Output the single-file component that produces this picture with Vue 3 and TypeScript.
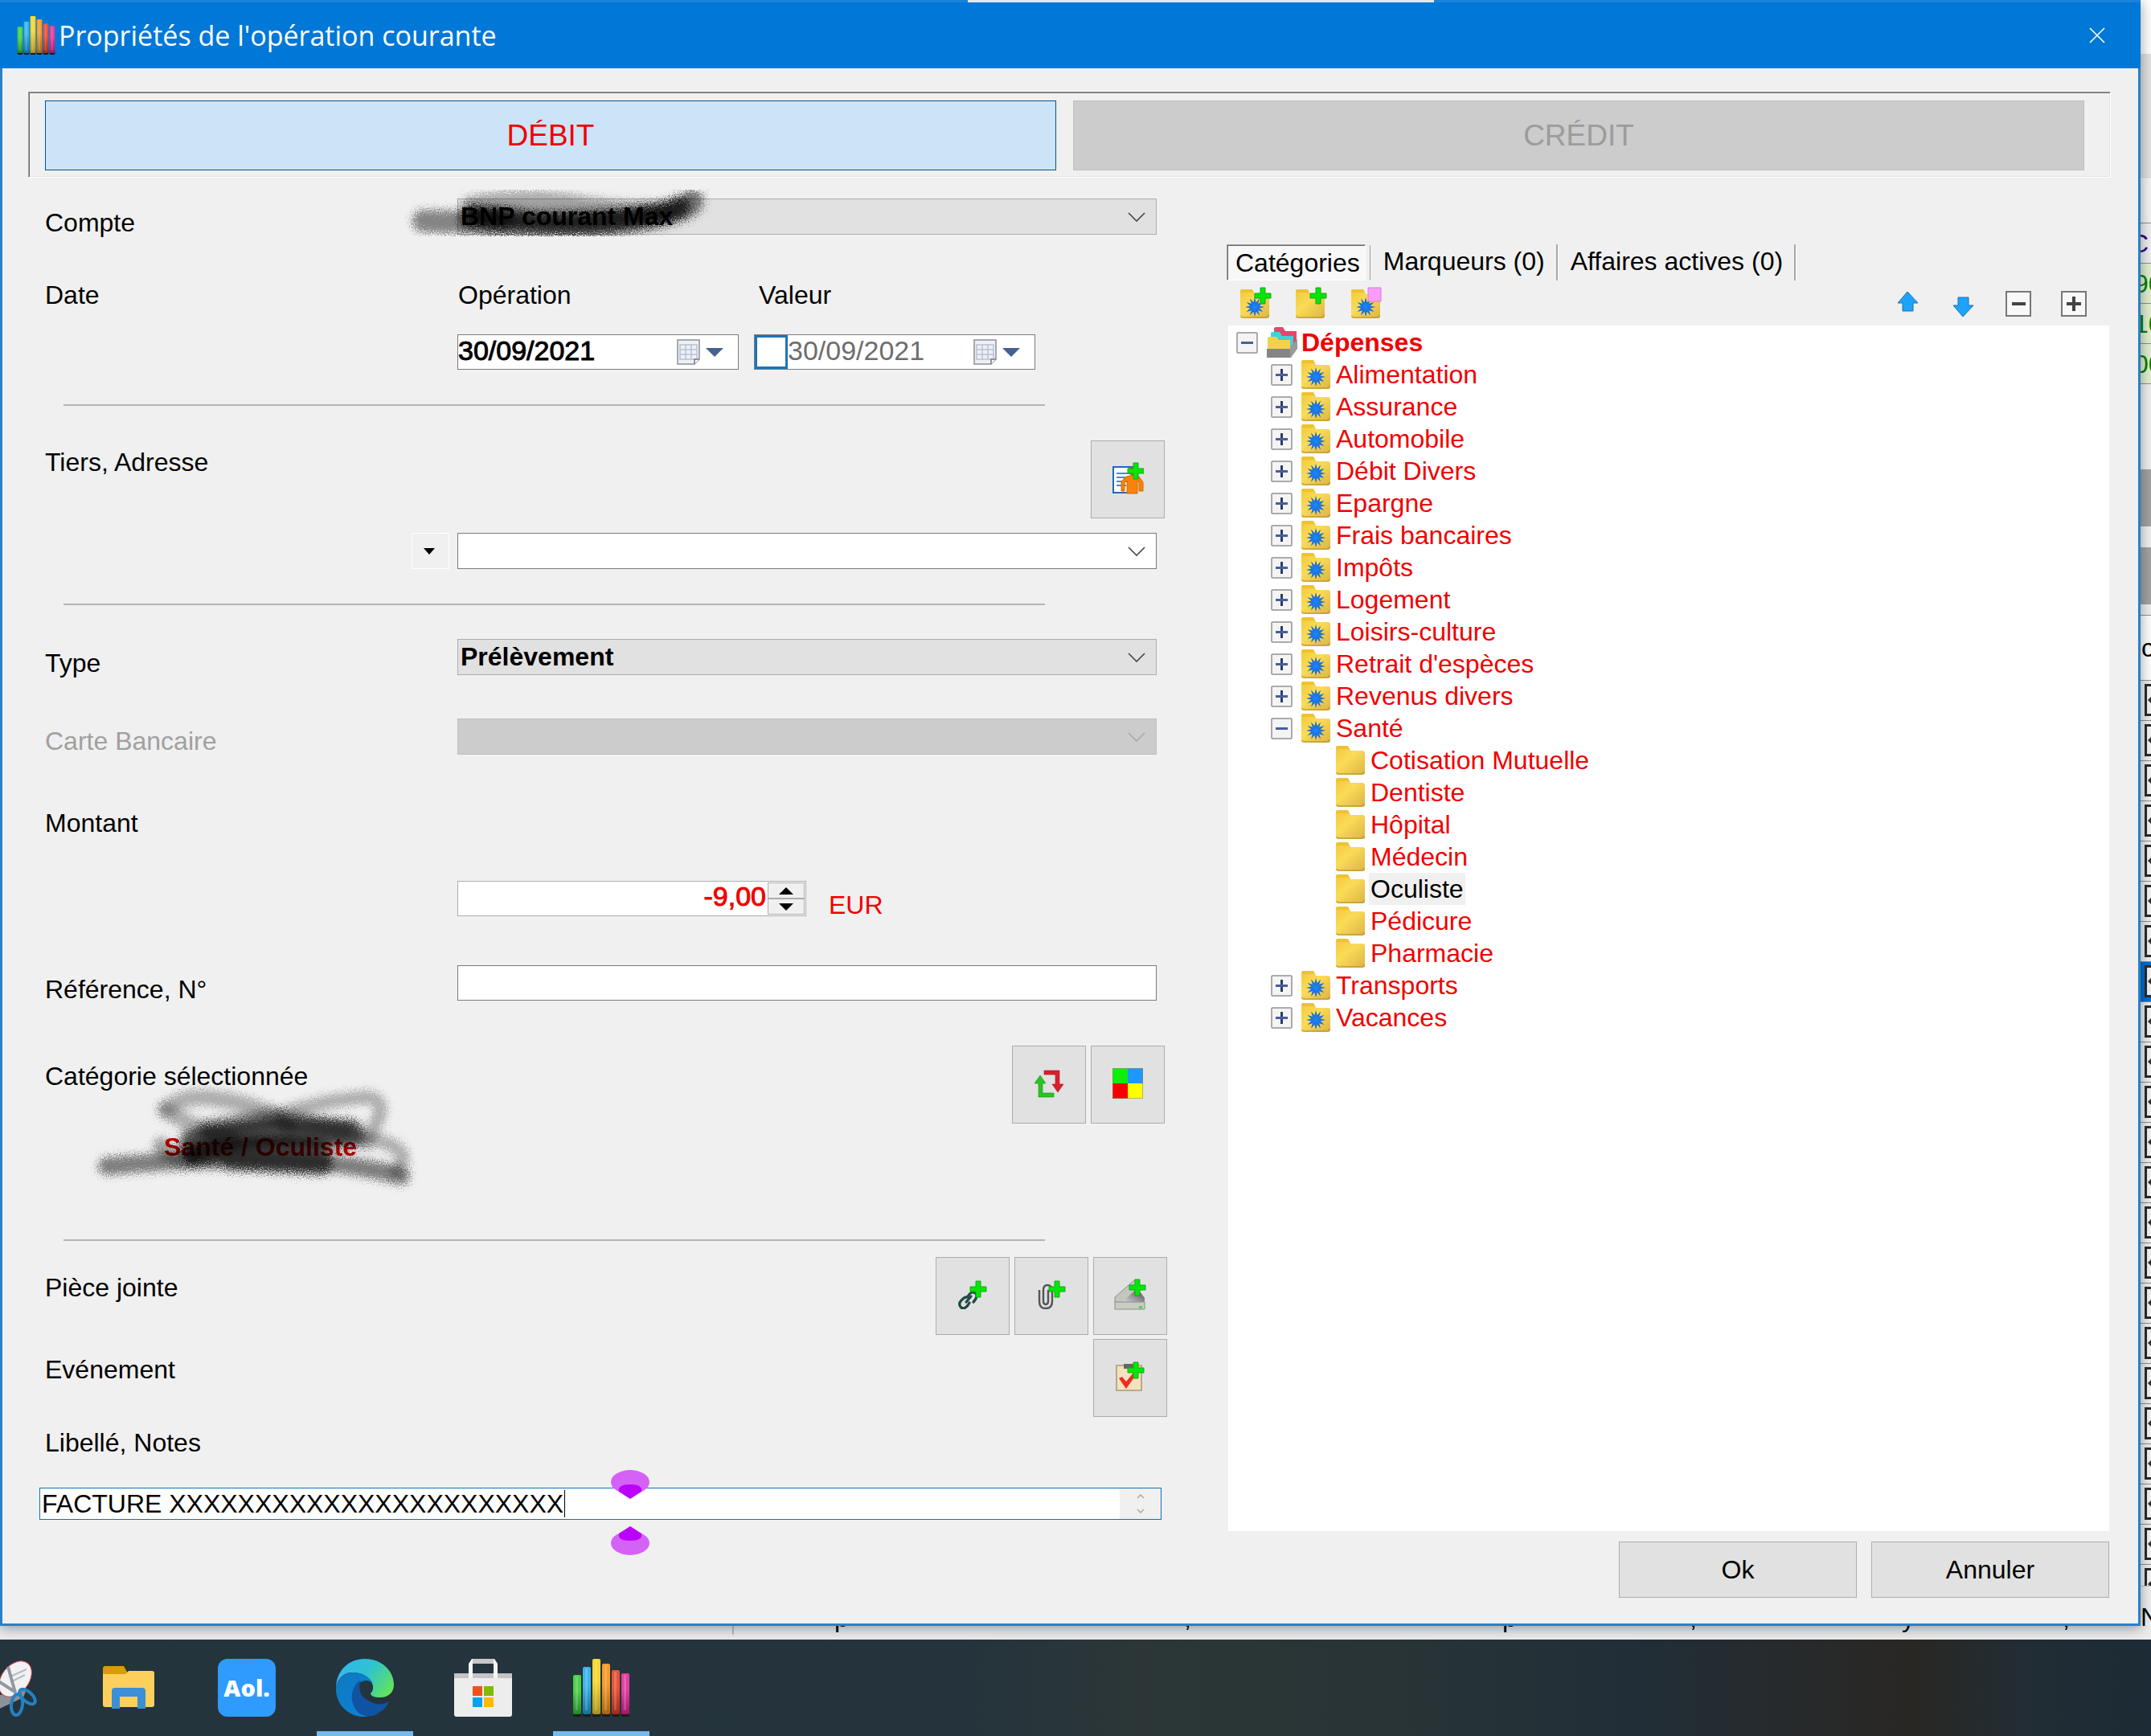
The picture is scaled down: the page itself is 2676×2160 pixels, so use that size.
<script setup lang="ts">
import { computed, ref } from 'vue'

interface CategoryRow {
  label: string
  level: number
  state: 'open' | 'closed' | 'leaf'
}

const closed = (label: string): CategoryRow => ({ label, level: 1, state: 'closed' })
const leaf = (label: string): CategoryRow => ({ label, level: 2, state: 'leaf' })

const categories: CategoryRow[] = [
  { label: 'Dépenses', level: 0, state: 'open' },
  ...['Alimentation', 'Assurance', 'Automobile', 'Débit Divers', 'Epargne', 'Frais bancaires',
    'Impôts', 'Logement', 'Loisirs-culture', "Retrait d'espèces", 'Revenus divers'].map(closed),
  { label: 'Santé', level: 1, state: 'open' },
  ...['Cotisation Mutuelle', 'Dentiste', 'Hôpital', 'Médecin', 'Oculiste', 'Pédicure', 'Pharmacie'].map(leaf),
  ...['Transports', 'Vacances'].map(closed),
]

const selected = ref('Oculiste')
const operationDate = ref('30/09/2021')
const valueDate = ref('30/09/2021')
const valueDateOn = ref(false)
const amount = ref('-9,00')
const reference = ref('')
const notes = ref('FACTURE XXXXXXXXXXXXXXXXXXXXXXX')

const star = computed(() =>
  Array.from({ length: 24 }, (_, i) => {
    const r = i % 2 ? 6 : 12
    const a = (i * Math.PI) / 12 - Math.PI / 2
    return `${(18 + r * Math.cos(a)).toFixed(1)},${(21 + r * Math.sin(a)).toFixed(1)}`
  }).join(' '),
)

const bars = [
  { x: 0, y: 20, fill: 'url(#bar-green)' },
  { x: 12, y: 10, fill: 'url(#bar-blue)' },
  { x: 24, y: 0, fill: 'url(#bar-yellow)' },
  { x: 36, y: 6, fill: 'url(#bar-orange)' },
  { x: 48, y: 14, fill: 'url(#bar-red)' },
  { x: 60, y: 18, fill: 'url(#bar-pink)' },
]

const barColors = [
  { id: 'bar-green', top: '#4fd04a', bottom: '#24862a' },
  { id: 'bar-blue', top: '#3db4ea', bottom: '#17719b' },
  { id: 'bar-yellow', top: '#f5d733', bottom: '#a8931c' },
  { id: 'bar-orange', top: '#f59c2c', bottom: '#a9660e' },
  { id: 'bar-red', top: '#e8533a', bottom: '#9c2c1a' },
  { id: 'bar-pink', top: '#e23fa0', bottom: '#a01768' },
]

const descenders = [
  { x: 1038, t: 'p' }, { x: 1473, t: ',' }, { x: 1869, t: 'p' },
  { x: 2102, t: ',' }, { x: 2366, t: 'y' }, { x: 2566, t: ',' },
]
</script>

<template>
  <div class="desktop">
    <svg class="defs" width="0" height="0" aria-hidden="true">
      <defs>
        <linearGradient v-for="c in barColors" :id="c.id" :key="c.id" x1="0" y1="0" x2="0" y2="1">
          <stop offset="0" :stop-color="c.top" /><stop offset="0.4" :stop-color="c.top" />
          <stop offset="1" :stop-color="c.bottom" />
        </linearGradient>
        <linearGradient id="folder" x1="0" y1="0" x2="1" y2="1">
          <stop offset="0" stop-color="#f3cb3c" /><stop offset="0.4" stop-color="#fadb58" />
          <stop offset="1" stop-color="#dcb445" />
        </linearGradient>
        <linearGradient id="scan" x1="0" y1="1" x2="1" y2="0">
          <stop offset="0" stop-color="#e0e0e0" /><stop offset="1" stop-color="#3c4244" />
        </linearGradient>
        <radialGradient id="starfill">
          <stop offset="0" stop-color="#1c86ff" /><stop offset="1" stop-color="#1560c0" />
        </radialGradient>
        <filter id="grain" x="-10%" y="-30%" width="120%" height="160%">
          <feTurbulence type="fractalNoise" baseFrequency="0.7" numOctaves="2" seed="4" result="n" />
          <feGaussianBlur in="SourceGraphic" stdDeviation="4" result="b" />
          <feDisplacementMap in="b" in2="n" scale="22" xChannelSelector="R" yChannelSelector="G" />
        </filter>
        <symbol id="i-folder" viewBox="0 0 36 36">
          <path d="M0 2q0-2 2-2h13l3 6H0z" fill="#efc22e" />
          <path d="M0 4h15l3 2h15q3 0 3 3v24q0 3-3 3H3q-3 0-3-3z" fill="url(#folder)" />
          <path d="M1 33q0 2 3 2h28q3 0 3-3" fill="none" stroke="#b8922e" stroke-opacity=".6" stroke-width="2" />
        </symbol>
        <symbol id="i-star" viewBox="0 0 36 36"><polygon :points="star" fill="url(#starfill)" /></symbol>
        <symbol id="i-plus" viewBox="0 0 22 22">
          <path d="M8 1h6v7h7v6h-7v7H8v-7H1V8h7z" fill="#06e606" stroke="#12a81c" stroke-width="1" />
        </symbol>
        <symbol id="i-chevron" viewBox="0 0 22 12">
          <path d="M1 1l10 10L21 1" fill="none" stroke="currentColor" stroke-width="1.6" />
        </symbol>
        <symbol id="i-calendar" viewBox="0 0 58 32">
          <path d="M1 1h27v24l-6 6H1z" fill="#eef0f5" stroke="#8a8f98" stroke-width="1.5" />
          <path d="M4 7h21v18H4zM4 13h21M4 19h21M11 7v18M18 7v18" fill="none" stroke="#b8c1d2" stroke-width="1.5" />
          <path d="M28 25h-6v6" fill="#fff" stroke="#777" stroke-width="1.5" />
          <path d="M36 11h22L47 22z" fill="#45618c" />
        </symbol>
        <symbol id="i-bars" viewBox="0 0 70 72">
          <g v-for="b in bars" :key="b.x">
            <rect :x="b.x" y="62" width="10" height="10" rx="2" fill="#1d1a1a" />
            <rect :x="b.x" :y="b.y" width="10" :height="69 - b.y" rx="2" :fill="b.fill" />
            <rect :x="b.x + 3" :y="b.y + 2" width="3" :height="62 - b.y" fill="#fff" opacity=".18" />
          </g>
        </symbol>
      </defs>
    </svg>

    <div class="workspace">
      <main class="dialog">
        <header class="titlebar">
          <svg class="app-icon"><use href="#i-bars" /></svg>
          <h1>Propriétés de l'opération courante</h1>
          <button class="close" aria-label="Fermer">
            <svg width="20" height="20" viewBox="0 0 20 20"><path d="M1 1l18 18M19 1L1 19" stroke="#fff" stroke-width="1.6" /></svg>
          </button>
        </header>

        <div class="direction">
          <button class="debit">DÉBIT</button>
          <button class="credit" disabled>CRÉDIT</button>
        </div>

        <div class="columns">
          <form class="form" @submit.prevent>
            <div class="row account">
              <label for="account">Compte</label>
              <span class="pick">
                <select id="account"><option>BNP courant Max</option></select>
                <svg><use href="#i-chevron" /></svg>
              </span>
              <svg class="scribble first" viewBox="0 0 400 80" aria-hidden="true">
                <g fill="none" stroke="#000" stroke-linecap="round" filter="url(#grain)">
                  <path d="M32 46Q70 48 130 46" stroke-width="28" opacity=".45" />
                  <path d="M90 26Q150 12 220 24T330 32" stroke-width="22" opacity=".28" />
                  <path d="M90 44Q190 62 280 48T366 20" stroke-width="28" opacity=".5" />
                  <path d="M95 38Q200 50 270 44T350 28" stroke-width="26" opacity=".72" />
                </g>
              </svg>
            </div>

            <div class="row date-heads">
              <span class="label">Date</span>
              <label for="op-date">Opération</label>
              <label for="val-date">Valeur</label>
            </div>
            <div class="row dates">
              <span class="datebox">
                <input id="op-date" v-model="operationDate" type="text" />
                <button aria-label="Ouvrir le calendrier"><svg><use href="#i-calendar" /></svg></button>
              </span>
              <span class="datebox muted">
                <input v-model="valueDateOn" type="checkbox" aria-label="Activer la date de valeur" />
                <input id="val-date" v-model="valueDate" type="text" />
                <button aria-label="Ouvrir le calendrier"><svg><use href="#i-calendar" /></svg></button>
              </span>
            </div>

            <hr />

            <div class="row tall third">
              <label for="payee">Tiers, Adresse</label>
              <span class="tools inset">
                <button class="tool" aria-label="Nouveau tiers">
                  <svg width="40" height="40" viewBox="0 0 40 40">
                    <path d="M2 6h24v32H2z" fill="#fff" stroke="#1d6ac4" stroke-width="2" />
                    <path d="M6 14h16M6 19h16M6 24h16M6 29h12" stroke="#1d5fb4" stroke-width="1.6" />
                    <path d="M12 36V24l6-6 8-2 8 2 5 7v11h-5V25l-2-2v16H19V23l-3 3v10z" fill="#f98207" stroke="#cf6a08" stroke-width="1" />
                    <circle cx="25" cy="11" r="5" fill="#b8601a" />
                    <use href="#i-plus" x="19" y="0" width="22" height="22" />
                  </svg>
                </button>
              </span>
            </div>
            <div class="row payee">
              <button class="drop" aria-label="Choix du tiers">
                <svg width="14" height="8" viewBox="0 0 14 8"><path d="M0 0h14L7 8z" /></svg>
              </button>
              <span class="pick white">
                <select id="payee"><option></option></select>
                <svg><use href="#i-chevron" /></svg>
              </span>
            </div>

            <hr />

            <div class="row type">
              <label for="type">Type</label>
              <span class="pick">
                <select id="type"><option>Prélèvement</option></select>
                <svg><use href="#i-chevron" /></svg>
              </span>
            </div>
            <div class="row card off">
              <label for="card">Carte Bancaire</label>
              <span class="pick">
                <select id="card" disabled><option></option></select>
                <svg><use href="#i-chevron" /></svg>
              </span>
            </div>
            <div class="row amount-label"><label for="amount">Montant</label></div>
            <div class="row amount">
              <span class="spin">
                <input id="amount" v-model="amount" type="text" />
                <span class="steps">
                  <button aria-label="Augmenter"><svg width="18" height="9" viewBox="0 0 18 9"><path d="M0 9L9 0l9 9z" /></svg></button>
                  <button aria-label="Diminuer"><svg width="18" height="9" viewBox="0 0 18 9"><path d="M0 0h18L9 9z" /></svg></button>
                </span>
              </span>
              <span class="currency">EUR</span>
            </div>
            <div class="row reference">
              <label for="reference">Référence, N°</label>
              <input id="reference" v-model="reference" type="text" />
            </div>

            <div class="row tall category">
              <span class="label">Catégorie sélectionnée</span>
              <span class="tools inset">
                <button class="tool" aria-label="Inverser">
                  <svg width="36" height="36" viewBox="0 0 36 36">
                    <path d="M12 2h19v17h5l-7 10-7-10h4V7H12z" fill="#d8202c" stroke="#a51520" stroke-width=".6" />
                    <path d="M24 35H5V18H0L7 8l7 10h-4v12h14z" fill="#27c522" stroke="#1a9018" stroke-width=".6" />
                  </svg>
                </button>
                <button class="tool" aria-label="Couleurs">
                  <svg width="38" height="38" viewBox="0 0 38 38">
                    <path d="M0 0h19v19H0z" fill="#0cf00c" /><path d="M19 0h19v19H19z" fill="#1c98ff" />
                    <path d="M0 19h19v19H0z" fill="#f80000" /><path d="M19 19h19v19H19z" fill="#ffff00" />
                    <path d="M0 0h38v38H0z" fill="none" stroke="#8a8a60" stroke-opacity=".6" stroke-width="2" />
                  </svg>
                </button>
              </span>
            </div>
            <div class="row chosen">
              <span>Santé / Oculiste</span>
              <svg class="scribble second" viewBox="0 0 420 140" aria-hidden="true">
                <g fill="none" stroke="#000" stroke-linecap="round" stroke-linejoin="round" filter="url(#grain)">
                  <path d="M100 34Q120 16 160 22Q220 30 250 56" stroke-width="20" opacity=".28" />
                  <path d="M96 36Q130 58 180 72" stroke-width="20" opacity=".28" />
                  <path d="M240 42Q290 24 350 20Q372 26 360 50L346 78" stroke-width="17" opacity=".28" />
                  <path d="M340 70Q394 78 392 98L384 112" stroke-width="17" opacity=".28" />
                  <path d="M24 106Q110 98 210 98T390 118" stroke-width="22" opacity=".48" />
                  <path d="M92 80Q96 96 130 96" stroke-width="20" opacity=".35" />
                  <path d="M150 60L230 46L320 62" stroke-width="24" opacity=".42" />
                  <path d="M132 78Q220 58 326 66" stroke-width="36" opacity=".66" />
                  <path d="M134 92Q220 76 286 88L290 102L180 96" stroke-width="30" opacity=".66" />
                </g>
              </svg>
            </div>

            <hr />

            <div class="row tall">
              <span class="label">Pièce jointe</span>
              <span class="tools">
                <button class="tool" aria-label="Ajouter un lien">
                  <svg width="36" height="36" viewBox="0 0 36 36">
                    <g fill="none" stroke="#1f4a44" stroke-width="3.2" stroke-linecap="round">
                      <path d="M14 28q-2 4-5 6q-4 2-6-1q-3-4 1-8q4-5 8-4" />
                      <path d="M10 27l6-7" />
                      <path d="M12 20q3-5 6-5q4 0 5 4q0 4-4 8" />
                    </g>
                    <use href="#i-plus" x="14" y="0" width="22" height="22" />
                  </svg>
                </button>
                <button class="tool" aria-label="Ajouter un fichier">
                  <svg width="36" height="36" viewBox="0 0 36 36">
                    <path d="M14 12v14q0 4-3 4t-3-4V12q0-6 5-6t6 6v14q0 9-8 9t-8-9V12" fill="none" stroke="#555" stroke-width="2.4" />
                    <use href="#i-plus" x="14" y="0" width="22" height="22" />
                  </svg>
                </button>
                <button class="tool" aria-label="Numériser">
                  <svg width="40" height="40" viewBox="0 0 40 40">
                    <path d="M1 29v-6L26 1l3 2v12L12 30z" fill="#c3c6bd" stroke="#8b8e86" />
                    <path d="M9 30L29 12l9 12v6z" fill="url(#scan)" />
                    <path d="M1 29h37v9H1z" fill="#c9ccc4" stroke="#8b8e86" />
                    <path d="M31 34h4v3h-4z" fill="#3fe03f" />
                    <use href="#i-plus" x="18" y="0" width="22" height="22" />
                  </svg>
                </button>
              </span>
            </div>
            <div class="row tall event">
              <span class="label">Evénement</span>
              <span class="tools">
                <button class="tool" aria-label="Ajouter un événement">
                  <svg width="36" height="38" viewBox="0 0 36 38">
                    <path d="M1 5h31v31H1z" fill="#f3e2bf" stroke="#bba98a" stroke-width="2" />
                    <path d="M10 3h12v6H10z" fill="#666" />
                    <path d="M4 21l4-2 5 6L22 14l3 3L13 34z" fill="#f02c22" />
                    <use href="#i-plus" x="14" y="0" width="22" height="22" />
                  </svg>
                </button>
              </span>
            </div>
            <div class="row notes-label"><label for="notes">Libellé, Notes</label></div>
            <div class="notes">
              <textarea id="notes" v-model="notes" rows="1"></textarea>
              <span class="scroller" aria-hidden="true">
                <svg width="10" height="24" viewBox="0 0 10 24"><path d="M1 5l4-4 4 4M1 19l4 4 4-4" fill="none" stroke="#aaa" stroke-width="1.5" /></svg>
              </span>
              <i class="caret"></i>
              <svg class="handles" viewBox="0 0 48 106" aria-hidden="true">
                <g id="handle">
                  <ellipse cx="24" cy="15" rx="24" ry="15" fill="#d462f6" />
                  <path d="M24 36L10 27q-2-9 14-9t14 9z" fill="#bb00fb" />
                </g>
                <use href="#handle" transform="matrix(1 0 0 -1 0 106)" />
              </svg>
            </div>
          </form>

          <section class="side">
            <div class="tabs" role="tablist">
              <button class="tab active" role="tab" aria-selected="true">Catégories</button>
              <button class="tab" role="tab">Marqueurs (0)</button>
              <button class="tab" role="tab">Affaires actives (0)</button>
            </div>

            <div class="toolbar">
              <button aria-label="Nouvelle catégorie">
                <svg width="40" height="40" viewBox="0 0 40 40">
                  <use href="#i-folder" x="1" y="3" width="36" height="36" /><use href="#i-star" x="1" y="4" width="36" height="36" />
                  <use href="#i-plus" x="18" y="0" width="22" height="22" />
                </svg>
              </button>
              <button aria-label="Nouvelle sous-catégorie">
                <svg width="40" height="40" viewBox="0 0 40 40">
                  <use href="#i-folder" x="1" y="3" width="36" height="36" />
                  <use href="#i-plus" x="18" y="0" width="22" height="22" />
                </svg>
              </button>
              <button aria-label="Modifier la catégorie">
                <svg width="40" height="40" viewBox="0 0 40 40">
                  <use href="#i-folder" x="1" y="3" width="36" height="36" /><use href="#i-star" x="1" y="4" width="36" height="36" />
                  <path d="M22 1h16v17H22z" fill="#fb9bfb" stroke="#d080d0" />
                </svg>
              </button>
              <span class="grow"></span>
              <button aria-label="Monter">
                <svg width="40" height="40" viewBox="0 0 40 40"><path d="M20 6l13 14h-6v10H14V20H8z" fill="#1fa2fb" stroke="#1673ba" /></svg>
              </button>
              <button aria-label="Descendre">
                <svg width="40" height="40" viewBox="0 0 40 40"><path d="M20 37l13-14h-6V13H14v10H8z" fill="#1fa2fb" stroke="#1673ba" /></svg>
              </button>
              <button aria-label="Tout réduire">
                <svg width="40" height="40" viewBox="0 0 40 40"><path d="M5 6h30v30H5z" fill="#f8f8f8" stroke="#777" stroke-width="2" /><path d="M12 21h17" stroke="#444" stroke-width="4" /></svg>
              </button>
              <button aria-label="Tout développer">
                <svg width="40" height="40" viewBox="0 0 40 40"><path d="M5 6h30v30H5z" fill="#f8f8f8" stroke="#777" stroke-width="2" /><path d="M11 21h18M20 12v18" stroke="#444" stroke-width="4" /></svg>
              </button>
            </div>

            <ul class="tree">
              <li v-for="c in categories" :key="c.label" :class="['level' + c.level, { selected: c.label === selected }]">
                <button v-if="c.state !== 'leaf'" class="expander" :aria-label="c.label">
                  <svg width="27" height="27" viewBox="0 0 27 27">
                    <rect x="1" y="1" width="25" height="25" rx="1" fill="#f4f4f4" stroke="#919191" stroke-width="1.5" />
                    <path v-if="c.state === 'closed'" d="M13.5 6v15" stroke="#2b3c66" stroke-width="3" />
                    <path d="M6 13.5h15" stroke="#465ea0" stroke-width="3" />
                  </svg>
                </button>
                <span v-else class="expander"></span>
                <svg v-if="c.level === 0" class="node root" viewBox="0 0 38 38">
                  <path d="M9 2q0-2 2-2h9l3 5h14v16H9z" fill="#e04a68" />
                  <path d="M5 8q0-2 2-2h9l3 5h14v16H5z" fill="#3fd3da" />
                  <path d="M38 15v12l-8 11h-3V27z" fill="#9a9a9a" />
                  <path d="M1 14q0-2 2-2h9l3 4h14v12H1z" fill="#f5d14b" />
                  <path d="M0 27h29v11H0z" fill="#858585" />
                </svg>
                <svg v-else class="node" viewBox="0 0 36 36">
                  <use href="#i-folder" width="36" height="36" />
                  <use v-if="c.level === 1" href="#i-star" width="36" height="36" />
                </svg>
                <a href="#" @click.prevent="selected = c.label">{{ c.label }}</a>
              </li>
            </ul>

            <div class="actions">
              <button>Ok</button>
              <button>Annuler</button>
            </div>
          </section>
        </div>
      </main>

      <aside class="behind" aria-hidden="true">
        <div class="b-top"></div>
        <div class="b-bar"></div>
        <div class="b-head"></div>
        <div class="b-cell purple"><span>C</span></div>
        <div class="b-cell green"><span>90</span></div>
        <div class="b-cell green"><span>10</span></div>
        <div class="b-cell green"><span>00</span></div>
        <div class="b-space"></div>
        <div class="b-block"></div>
        <div class="b-gap"></div>
        <div class="b-block"></div>
        <div class="b-column"><span>c</span></div>
        <div v-for="n in 23" :key="n" :class="['b-row', { current: n === 8, last: n === 23 }]">
          <svg width="8" height="40" viewBox="0 0 8 40">
            <path d="M0 0h8v40H0z" fill="#2b2b2b" /><path d="M3 3h5v34H3z" fill="#f4f4f4" />
            <path d="M8 16l-4 4 4 4z" fill="#333" />
          </svg>
        </div>
        <div class="b-foot"><span>N</span></div>
      </aside>
    </div>

    <svg class="under" aria-hidden="true">
      <path d="M912 0v11" stroke="#8c8c8c" />
      <text v-for="d in descenders" :key="d.x" :x="d.x" y="1">{{ d.t }}</text>
    </svg>

    <nav class="taskbar">
      <button aria-label="Outil Capture">
        <svg width="72" height="72" viewBox="0 0 72 72">
          <path d="M0 50L56 38l-4 10L14 66z" fill="#8b9299" />
          <ellipse cx="42" cy="25" rx="17" ry="25" transform="rotate(38 42 25)" fill="#f2f2f4" stroke="#c53d45" />
          <path d="M36 22l20-9M36 29l18-9" stroke="#b9bcc4" stroke-width="2" />
          <path d="M33 10l9 32M18 26l25 16" stroke="#9298a0" stroke-width="4" />
          <g fill="none" stroke="#2382c4" stroke-width="4"><ellipse cx="44" cy="57" rx="7" ry="13" transform="rotate(6 44 57)" /><ellipse cx="57" cy="47" rx="6" ry="12" transform="rotate(-48 57 47)" /></g>
        </svg>
      </button>
      <button aria-label="Explorateur de fichiers">
        <svg width="64" height="72" viewBox="0 0 64 72">
          <path d="M0 12q0-3 3-3h23l5 9v6H0z" fill="#dd9a06" />
          <path d="M0 19h28l4-4h29q3 0 3 3v39q0 3-3 3H3q-3 0-3-3z" fill="#fdd05c" />
          <path d="M11 62V40q0-4 4-4h34q4 0 4 4v22H43V47H21v15z" fill="#3b8fd6" />
        </svg>
      </button>
      <button aria-label="Aol"><span class="aol">Aol.</span></button>
      <button class="running" aria-label="Microsoft Edge">
        <svg width="72" height="72" viewBox="0 0 72 72">
          <defs>
            <linearGradient id="e1" x1="0" y1=".2" x2="1" y2=".7"><stop offset="0" stop-color="#36b5f2" /><stop offset=".5" stop-color="#2ec3cf" /><stop offset="1" stop-color="#62e35c" /></linearGradient>
            <linearGradient id="e2" x1="0" y1="0" x2="1" y2="1"><stop offset="0" stop-color="#0f78bd" /><stop offset="1" stop-color="#0a84e0" /></linearGradient>
          </defs>
          <path d="M0 35C1 14 16 0 36 0c21 0 36 15 36 32 0 10-7 16-17 16-7 0-13-2-12-5 3-3 3-5 3-8C45 22 30 16 18 17 8 18 2 26 0 35z" fill="url(#e1)" />
          <path d="M0 35C2 24 10 17 22 17c13 0 22 8 24 14-5-6-14-5-16 3-3 15 8 26 22 29-2 3-8 9-18 9C14 71-1 56 0 35z" fill="url(#e2)" />
          <path d="M30 27c-12 8-14 27-3 39 6 6 14 6 18 5 10-3 18-10 21-18-5 3-11 4-16 3-12-2-17-13-14-21z" fill="#1153a3" />
          <path d="M30 30c5-5 14-4 16 4 1 4-4 6-3 10 2 4 13 8 24 7-12 9-34 2-37-10-1-4-1-8 0-11z" fill="#22343d" />
        </svg>
      </button>
      <button aria-label="Microsoft Store">
        <svg width="72" height="72" viewBox="0 0 72 72">
          <path d="M0 18h72v8H0z" fill="#c4c4c4" />
          <path d="M22 0h28l4 6v18h-5V6H23v18h-5V6z" fill="#f5f5f5" /><path d="M23 0h26v6H23z" fill="#c8c8c8" />
          <path d="M0 24h72v45q0 3-3 3H3q-3 0-3-3z" fill="#ededed" />
          <path d="M23 34h12v12H23z" fill="#f1511b" /><path d="M37 34h12v12H37z" fill="#80ba01" />
          <path d="M23 48h12v12H23z" fill="#02a4ef" /><path d="M37 48h12v12H37z" fill="#ffb902" />
        </svg>
      </button>
      <button class="running" aria-label="Comptes"><svg width="72" height="72"><use href="#i-bars" /></svg></button>
    </nav>
  </div>
</template>

<style>
body {
  margin: 0;
}
</style>

<style scoped>
.desktop {
  display: flex;
  flex-direction: column;
  min-height: 100vh;
  overflow: hidden;
  background: #ececec;
  color: #000;
  font: 32px/36px "Liberation Sans", Arial, sans-serif;
}
.desktop *, .desktop *::before, .desktop *::after { box-sizing: border-box; }
.defs { position: absolute; }
svg { display: block; flex: none; }
button, input, select, textarea { margin: 0; padding: 0; border: 0; border-radius: 0; background: none; color: inherit; font: inherit; outline: none; }

.workspace { flex: 1; display: flex; }
.dialog {
  position: relative;
  z-index: 1;
  flex: 1;
  min-width: 0;
  display: flex;
  flex-direction: column;
  border: 3px solid #2a80c8;
  border-top: 0;
  background: #f0f0f0;
  box-shadow: 0 2px 16px rgba(0, 0, 0, 0.4);
}
.titlebar {
  display: flex;
  align-items: center;
  height: 85px;
  margin: 0 -3px;
  padding: 0 32px 0 21px;
  border-top: 3px solid #1a82dc;
  border-image: linear-gradient(90deg, #1a82dc 0 45.2%, #dfe9ee 45.2% 67%, #1a82dc 67%) 3 0 0 0;
  background: #0078d7;
  color: #fff;
}
.app-icon { width: 48px; height: 48px; }
h1 { flex: 1; margin: 0 0 0 4px; font: 34px/44px "Open Sans", "Noto Sans", sans-serif; }
.close { display: flex; align-items: center; justify-content: center; width: 44px; height: 44px; }

.direction {
  display: flex;
  gap: 21px;
  height: 107px;
  margin: 29px 34px 0 32px;
  padding: 10px 32px 8px 20px;
  border: 1px solid;
  border-color: #a0a0a0 #fff #fff #a0a0a0;
  box-shadow: inset 1px 1px #696969, inset -1px -1px #e3e3e3;
}
.direction button { flex: 1; border: 1px solid #bfbfbf; background: #ccc; color: #9c9c9c; font-size: 37px; }
.direction .debit { border-color: #00548f; background: #cce4f7; color: #f00000; }

.columns {
  flex: 1;
  display: grid;
  grid-template-columns: minmax(0, 1403fr) minmax(0, 1098fr);
  gap: 74px;
  padding: 0 36px 32px 46px;
}
.form { display: flex; flex-direction: column; }
.row { position: relative; display: flex; align-items: flex-start; padding: 0 13px 0 7px; }
.row > label:first-child, .row > .label { flex: none; width: 513px; padding-top: 12px; white-space: nowrap; }
.account, .payee, .type, .card { height: 45px; }
.dates, .amount, .reference { height: 44px; }
.account { margin-top: 26px; }
.pick { flex: 1; display: grid; align-items: center; height: 45px; }
.pick select {
  grid-area: 1 / 1;
  appearance: none;
  width: 100%;
  height: 45px;
  padding: 0 50px 2px 3px;
  border: 1px solid #adadad;
  background: #e1e1e1;
  font-weight: 700;
}
.pick svg { grid-area: 1 / 1; justify-self: end; width: 22px; height: 12px; margin-right: 14px; color: #444; pointer-events: none; }
.pick.white select { border-color: #7a7a7a; background: #fff; }
.off { color: #a0a0a0; }
.off .pick select { border-color: #bfbfbf; background: #ccc; opacity: 1; }
.off .pick svg { color: #aaa; }

.row.date-heads { height: 36px; margin-top: 57px; }
.row.date-heads > .label { padding-top: 0; }
.date-heads label { width: 374px; padding-left: 1px; }
.dates { gap: 19px; margin-top: 31px; padding-left: 520px; }
.datebox { display: flex; align-items: center; width: 350px; height: 44px; padding-right: 18px; border: 1px solid #7a7a7a; background: #fff; }
.datebox input[type="text"] { flex: 1; min-width: 0; height: 42px; padding-bottom: 4px; font-size: 34px; }
.datebox input[type="text"], .spin input { -webkit-text-stroke: 1px currentColor; }
.datebox.muted { color: #6d6d6d; }
.datebox.muted input[type="text"] { -webkit-text-stroke: 0; }
.datebox input[type="checkbox"] { appearance: none; flex: none; width: 41px; height: 42px; border: 3px solid #1d74b8; background: #fff; }
.datebox svg { width: 58px; height: 32px; }

hr { width: auto; height: 2px; margin: 43px 152px 0 30px; border: 0; background: #b4b4b4; }

.row.tall { height: 97px; margin-top: 20px; padding-right: 0; }
.row.tall > .label, .row.tall > label { padding-top: 20px; }
.row.tall.third { margin-top: 43px; }
.row.tall.third > label { padding-top: 9px; }
.row.tall.event { margin-top: 5px; }
.row.tall.category { margin-top: 56px; }
.tools { display: flex; gap: 6px; margin-left: auto; }
.tools.inset { margin-right: 3px; }
.tool { display: flex; align-items: center; justify-content: center; width: 92px; height: 97px; padding-bottom: 4px; border: 1px solid #adadad; background: #e1e1e1; }

.payee { gap: 10px; margin-top: 18px; padding-left: 463px; }
.drop { display: flex; align-items: center; justify-content: center; width: 47px; height: 45px; padding-right: 4px; border: 1px solid #fff; }
.type { margin-top: 42px; }
.card { margin-top: 54px; }
.row.card > label { padding-top: 10px; }
.row.amount-label { height: 36px; margin-top: 67px; }
.row.amount-label > label:first-child, .row.notes-label > label:first-child { padding-top: 0; }
.amount { margin-top: 54px; padding-left: 520px; color: #f00000; }
.spin { display: flex; width: 434px; height: 44px; padding: 1px; border: 1px solid #adadad; background: #fff; }
.spin input { flex: 1; min-width: 0; padding: 0 2px 6px 0; font-size: 34px; text-align: right; }
.steps { display: flex; flex-direction: column; width: 46px; color: #000; }
.steps button { flex: 1; display: flex; align-items: center; justify-content: center; border: 1px solid #adadad; background: #f0f0f0; }
.currency { padding: 12px 0 0 28px; }
.reference { margin-top: 61px; }
.reference input { flex: 1; min-width: 0; height: 44px; border: 1px solid #7a7a7a; background: #fff; }
.chosen { margin-top: 11px; padding-left: 155px; color: #d00000; font-weight: 700; }
.chosen + hr { margin-top: 97px; }

.scribble { position: absolute; pointer-events: none; overflow: visible; }
.scribble.first { left: 446px; top: -18px; width: 400px; height: 80px; }
.scribble.second { left: 60px; top: -64px; width: 420px; height: 140px; }

.row.notes-label { margin-top: 14px; }
.notes { position: relative; display: flex; height: 40px; margin: 38px 7px 0 0; border: 1px solid #1070b8; background: #fff; }
.notes textarea { flex: 1; height: 38px; padding: 1px 2px; overflow: hidden; resize: none; white-space: nowrap; }
.scroller { display: flex; align-items: center; justify-content: center; width: 51px; background: #f0f0f0; }
.caret { position: absolute; left: 652px; top: 2px; width: 1px; height: 34px; background: #000; }
.handles { position: absolute; left: 710px; top: -23px; width: 48px; height: 106px; }

.side { display: flex; flex-direction: column; padding-top: 83px; }
.tabs { display: flex; height: 45px; }
.tab { padding: 0 14px 3px 16px; border-right: 2px solid #a8a8a8; box-shadow: 1px 0 #fff; white-space: nowrap; }
.tab.active {
  padding: 0 6px 0 10px;
  margin-right: 6px;
  border: 1px solid;
  border-color: #a0a0a0 #fff #fff #a0a0a0;
  background: #f8f8f8;
  box-shadow: inset 1px 1px #696969, 6px 0 0 -1px #f0f0f0, 7px 0 0 -1px #a0a0a0;
}
.toolbar { display: flex; gap: 29px; align-items: center; height: 56px; padding: 0 24px 0 16px; }
.grow { flex: 1; }
.tree { flex: 1; margin: 0 0 13px 2px; padding: 1px 0 0; background: #fff; color: #f00000; list-style: none; }
.tree li { display: flex; align-items: center; height: 40px; padding-left: 10px; }
.tree .level1 { padding-left: 53px; }
.tree .level2 { padding-left: 96px; }
.tree .level0 { font-weight: 700; }
.expander { flex: none; width: 27px; margin-right: 11px; }
.expander + .node { width: 36px; height: 36px; margin-right: 5px; }
.expander + .node.root { width: 38px; height: 38px; margin-right: 3px; }
.tree a { padding: 0 2px; line-height: 40px; color: inherit; text-decoration: none; }
.tree .selected a { background: #f0f0f0; color: #000; }
.actions { display: flex; justify-content: flex-end; gap: 18px; }
.actions button { width: 296px; height: 70px; border: 1px solid #adadad; background: #e1e1e1; }

.behind { width: 13px; overflow: hidden; white-space: nowrap; background: #f0f0f0; }
.behind > div { overflow: hidden; }
.behind span { display: block; }
.b-top { height: 67px; background: #fff; }
.b-bar { height: 155px; background: #e2e2e2; }
.b-head { height: 55px; border-top: 1px solid #fff; background: #f4f4f4; }
.b-cell { height: 50px; padding-top: 7px; border-top: 1px solid #909090; }
.b-cell span { margin-left: -8px; }
.b-cell.purple { color: #3c0080; }
.b-cell.purple span { margin-left: -13px; }
.b-cell.green { background: #e2f0d0; color: #008000; }
.b-space { height: 107px; border-top: 1px solid #909090; }
.b-block { height: 71px; background: #a3a3a3; }
.b-gap { height: 26px; }
.b-column { height: 81px; margin-top: 13px; padding-top: 22px; border-top: 1px solid #909090; background: #fff; }
.b-column span { margin-left: 1px; }
.b-row { height: 50px; padding: 4px 0 0 5px; border-top: 1px solid #909090; }
.b-row.current { background: #0070d0; }
.b-row.last { height: 27px; }
.b-foot { height: 50px; padding-top: 20px; border-top: 1px solid #c0c0c0; }

.under { width: 100%; height: 17px; overflow: hidden; background: #ececec; }

.taskbar {
  position: relative;
  z-index: 2;
  display: flex;
  gap: 27px;
  height: 120px;
  background: linear-gradient(90deg, #24343d 0, #25343c 45%, #2c3637 53%, #283436 65%, #212e37 76%, #282929 85%, #292724 89%, #222d34 94%, #1c2b35 100%);
}
.taskbar button { flex: none; display: flex; align-items: center; justify-content: center; width: 120px; border-bottom: 6px solid transparent; padding-top: 6px; }
.taskbar button:first-child { margin-left: -47px; }
.taskbar .running { border-bottom-color: #76b9ed; }
.aol { display: flex; align-items: center; justify-content: center; width: 72px; height: 72px; border-radius: 12px; background: #2f9bff; color: #fff; font: 800 29px/36px "Open Sans", sans-serif; }
</style>
